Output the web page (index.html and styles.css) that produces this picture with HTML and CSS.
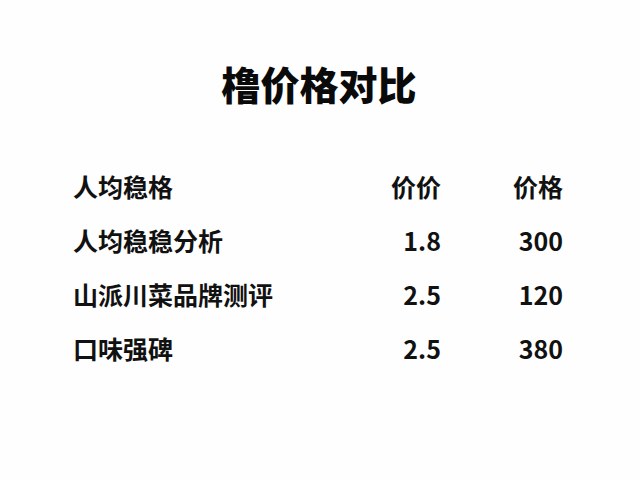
FILE: index.html
```html
<!DOCTYPE html>
<html lang="zh-CN">
<head>
<meta charset="utf-8">
<title>橹价格对比</title>
<link rel="stylesheet" href="styles.css">
</head>
<body>
<main class="page">
  <h1 class="title">橹价格对比</h1>
  <div class="table">
    <div class="row head">
      <div class="name">人均稳格</div>
      <div class="num">价价</div>
      <div class="num">价格</div>
    </div>
    <div class="row">
      <div class="name">人均稳稳分析</div>
      <div class="num">1.8</div>
      <div class="num">300</div>
    </div>
    <div class="row">
      <div class="name">山派川菜品牌测评</div>
      <div class="num">2.5</div>
      <div class="num">120</div>
    </div>
    <div class="row">
      <div class="name">口味强碑</div>
      <div class="num">2.5</div>
      <div class="num">380</div>
    </div>
  </div>
</main>
</body>
</html>
```
FILE: styles.css
```css
html, body {
  margin: 0;
  padding: 0;
  background: #fefefe;
}
body {
  width: 640px;
  height: 480px;
  overflow: hidden;
  font-family: "Noto Sans CJK SC", "Noto Sans", sans-serif;
  color: #111;
}
.page {
  display: flex;
  flex-direction: column;
  padding-top: 58px;
}
.title {
  margin: 0;
  text-align: center;
  font-size: 39px;
  line-height: 50px;
  font-weight: 900;
  color: #0a0a0a;
  padding-right: 2px;
}
.table {
  margin: 51px 0 0 73px;
  width: 490px;
  display: flex;
  flex-direction: column;
}
.row {
  display: grid;
  grid-template-columns: 1fr 100px 122px;
  height: 54px;
  align-items: center;
  font-size: 25px;
  font-weight: 600;
}
.num {
  text-align: right;
}
```
